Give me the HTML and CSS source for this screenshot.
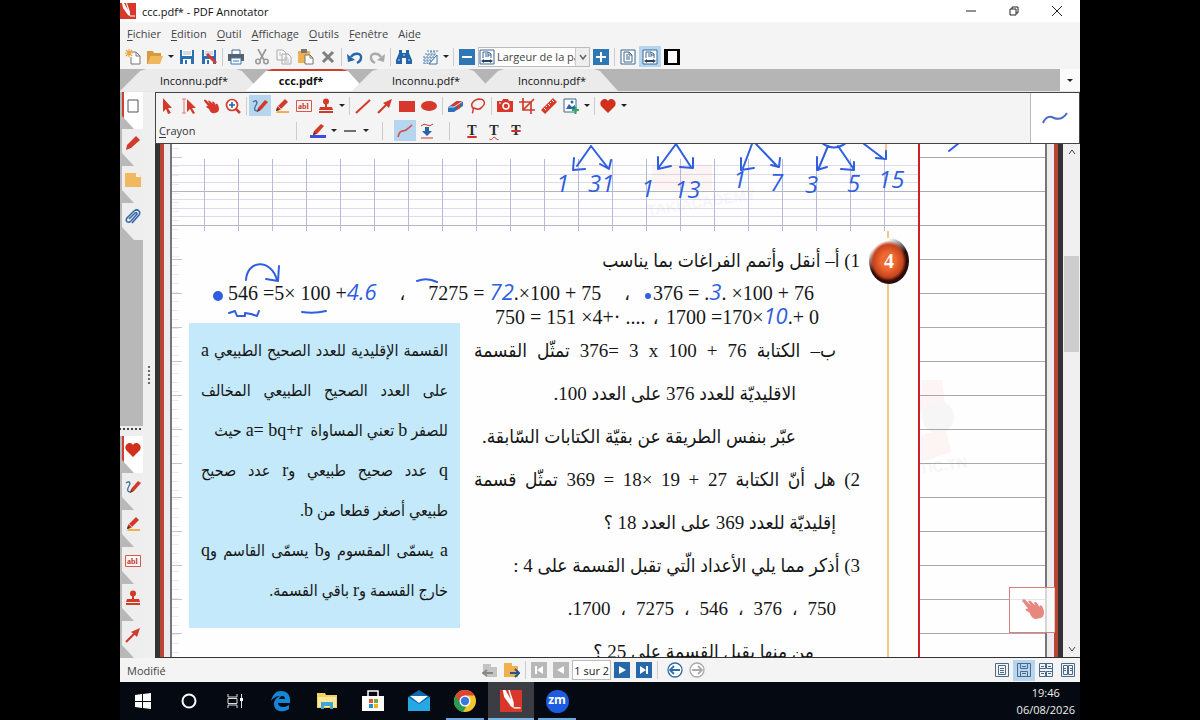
FILE: index.html
```html
<!DOCTYPE html>
<html lang="fr">
<head>
  <meta charset="UTF-8">
  <title>ccc.pdf* - PDF Annotator</title>
  <link rel="stylesheet" href="styles.css">
</head>
<body>

  <!-- Icons used more than once -->
  <svg class="sprite" aria-hidden="true">
    <symbol id="logo" viewBox="0 0 16 16"><path fill="#d8382c" d="M0 0h16v16H0z"/><path fill="#fff" d="M2 0l1 5 5 7 2 1V9L7 0H6l2 7-4-7z"/><path d="M10 13h5" stroke="#fff"/></symbol>
    <symbol id="pen" viewBox="0 0 16 16"><path d="M1 4c3-3 5 0 3 3s-2 6 1 6" fill="none" stroke="#3f6c9c" stroke-width="1.3"/><path d="M5 14l1-4 7-8 3 2-7 8z" fill="#d23a2a"/><path d="M5 14l1-3 2 1z" fill="#333"/></symbol>
    <symbol id="marker" viewBox="0 0 16 16"><path d="M3 13h12v2H2z" fill="#f2b04a"/><path d="M2 13l1-4 8-8 3 3-8 8z" fill="#d23a2a"/><path d="M2 13l1-3 2 2z" fill="#333"/><path d="M4 8l3 3" stroke="#f7b9a8"/></symbol>
    <symbol id="abl" viewBox="0 0 16 16"><path d="M.5 2.500h15v11H.5z" fill="#fff6f5" stroke="#d8584a"/><text x="2" y="11" class="abl-text">abl</text></symbol>
    <symbol id="stamp" viewBox="0 0 16 16"><circle cx="8" cy="3.500" r="3" fill="#d23a2a"/><path d="M7 5h2v4h5l1 3H1l1-3h5zM1 13h14v2H1z" fill="#d23a2a"/></symbol>
    <symbol id="heart" viewBox="0 0 16 16"><path d="M8 15L1 8C-1 4 2 1 5 1q2 0 3 2 1-2 3-2c3 0 6 3 4 7z" fill="#d0301c"/></symbol>
    <symbol id="redarrow" viewBox="0 0 16 16"><path d="M1 15L10 6" stroke="#d23a2a" stroke-width="2.200"/><path d="M15 1l-3 9-3-3-3-2z" fill="#d23a2a"/></symbol>
    <symbol id="hand" viewBox="0 0 16 16"><path d="M1 2q1-1 2 0l4 4-2-3q1-1 2 0l3 3-1-2q1-1 2 0l2 3V6q1-1 2 1c2 4 1 8-3 8-3 1-5-1-6-4L3 9q0-1 2-1L1 3z" fill="#d8382c"/></symbol>
    <symbol id="page" viewBox="0 0 16 16"><path d="M1 1h14v14H1z" fill="#fff" stroke="#3d6690"/><path d="M4 3h5l3 3v7H4zM9 3v3h3M6 6h2M6 8h4M6 10h4" fill="none" stroke="#3d6690"/></symbol>
    <symbol id="fit" viewBox="0 0 16 16"><path d="M1 1h14v14H1z" fill="#fff" stroke="#3d6690"/><path d="M4 9V3h5l3 2v4M6 5h2M6 7h4M9 3v3h3" fill="none" stroke="#3d6690"/><path d="M2 12l3-2v1h6v-1l3 2-3 2v-1H5v1z" fill="#24435f"/></symbol>
    <symbol id="floppy" viewBox="0 0 16 16"><path d="M1 1h14v14H1z" fill="#2c6fb5"/><path d="M3 1h10v6H3zM4 10h8v5H4z" fill="#fff"/><path d="M4 3h8M4 5h8" stroke="#a9b8c6"/><path d="M6 11h2v4H6z" fill="#2c6fb5"/></symbol>
    <symbol id="undo" viewBox="0 0 16 16"><path d="M4 8c3-5 11-4 10 1 0 2-2 4-4 5" fill="none" stroke="currentColor" stroke-width="2.400"/><path d="M0 5l1 8 7-2z" fill="currentColor"/></symbol>
  </svg>

  <div class="app">

    <header class="titlebar">
      <svg class="logo"><use href="#logo"/></svg>
      <h1>ccc.pdf* - PDF Annotator</h1>
      <div class="window-buttons">
        <button aria-label="Réduire"><svg viewBox="0 0 10 10"><path d="M0 5h10"/></svg></button>
        <button aria-label="Restaurer"><svg viewBox="0 0 10 10"><path d="M1 3h6v6H1zM3 3V1h6v6H7" fill="none"/></svg></button>
        <button aria-label="Fermer"><svg viewBox="0 0 10 10"><path d="M0 0l10 10M10 0L0 10"/></svg></button>
      </div>
    </header>

    <nav class="menubar">
      <a href="#"><u>F</u>ichier</a>
      <a href="#"><u>E</u>dition</a>
      <a href="#"><u>O</u>util</a>
      <a href="#"><u>A</u>ffichage</a>
      <a href="#"><u>O</u>utils</a>
      <a href="#"><u>F</u>enêtre</a>
      <a href="#">Ai<u>d</u>e</a>
    </nav>

    <div class="toolbar main-tools">
      <button aria-label="Nouveau"><svg viewBox="0 0 16 16"><path d="M5 3h6l4 4v8H6V8" fill="#fff" stroke="#777"/><path d="M11 3v4h4" fill="none" stroke="#777"/><path d="M4 0v8M0 4h8M1 1l6 6M7 1L1 7" stroke="#eda63c" stroke-width="1.200"/></svg></button>
      <button aria-label="Ouvrir"><svg viewBox="0 0 16 16"><path d="M0 2h6l1 2h7v3H4l-3 8H0z" fill="#d99a3e"/><path d="M4 7h12l-3 8H1z" fill="#f0b75e"/></svg></button>
      <button class="caret" aria-label="Fichiers récents"></button>
      <button aria-label="Enregistrer"><svg><use href="#floppy"/></svg></button>
      <button aria-label="Enregistrer sous"><svg viewBox="0 0 16 16"><use href="#floppy"/><path d="M6 5l9 9" stroke="#d8382c" stroke-width="3"/></svg></button>
      <i class="sep"></i>
      <button aria-label="Imprimer"><svg viewBox="0 0 16 16"><path d="M4 1h8v5H4z" fill="#fff" stroke="#3d6690"/><path d="M0 5h16v7H0z" fill="#5b6169"/><path d="M3 9h10v6H3z" fill="#fff" stroke="#3576b4"/><path d="M5 12h6" stroke="#3576b4"/></svg></button>
      <i class="gap"></i>
      <button aria-label="Couper"><svg viewBox="0 0 16 16"><path d="M4 0l6 11M12 0L6 11" stroke="#999" stroke-width="1.700"/><g fill="none" stroke="#999" stroke-width="1.600"><circle cx="4" cy="12.500" r="2.200"/><circle cx="12" cy="12.500" r="2.200"/></g></svg></button>
      <button aria-label="Copier"><svg viewBox="0 0 16 16"><path d="M1 1h6l3 3v7H1zM6 5h6l3 3v7H6z" fill="#f8f8f8" stroke="#aaa"/><path d="M3 4h2M3 6h3M8 9h4M8 11h5M8 13h5" stroke="#bbb"/></svg></button>
      <button aria-label="Coller"><svg viewBox="0 0 16 16"><path d="M0 2h12v12H0z" fill="#eeb050"/><path d="M3 0h6v4H3z" fill="#777"/><path d="M7 6h5l3 3v6H7z" fill="#fff" stroke="#777"/><path d="M12 6v3h3" fill="none" stroke="#777"/></svg></button>
      <button aria-label="Supprimer"><svg viewBox="0 0 16 16"><path d="M3 3l10 10M13 3L3 13" stroke="#808080" stroke-width="3"/></svg></button>
      <i class="sep"></i>
      <button class="blue" aria-label="Annuler"><svg><use href="#undo"/></svg></button>
      <button class="redo" aria-label="Rétablir"><svg><use href="#undo"/></svg></button>
      <i class="sep"></i>
      <button aria-label="Rechercher"><svg viewBox="0 0 16 16"><path d="M3 1h3v3h4V1h3v3l3 7v4h-6V9H6v6H0v-4l3-7z" fill="#2365a8"/><path d="M2 11h2M12 11h2M7 6h2" stroke="#bcd6ee"/></svg></button>
      <i class="gap"></i>
      <button aria-label="Grille"><svg viewBox="0 0 16 16"><path d="M5 2h11M3 5h12M1 8h12M1 11h11M1 14h9M3 8v7M6 5v10M9 2v13M12 2v10" stroke="#4f80b0" stroke-dasharray="2 1"/><path d="M7 15L15 6v9z" fill="#fff" stroke="#3974ad"/></svg></button>
      <button class="caret" aria-label="Options de grille"></button>
      <i class="sep"></i>
      <button aria-label="Zoom arrière"><svg viewBox="0 0 16 16"><path d="M0 0h16v16H0z" fill="#2f76b5"/><path d="M3 8h10" stroke="#fff" stroke-width="2"/></svg></button>
      <div class="zoom-box">
        <svg><use href="#fit"/></svg>
        <select aria-label="Zoom"><option>Largeur de la page</option></select>
        <span class="chevron"><svg viewBox="0 0 8 8"><path d="M1 2l3 4 3-4" fill="none" stroke="#666" stroke-width="1.500"/></svg></span>
      </div>
      <button aria-label="Zoom avant"><svg viewBox="0 0 16 16"><path d="M0 0h16v16H0z" fill="#2f76b5"/><path d="M3 8h10M8 3v10" stroke="#fff" stroke-width="2"/></svg></button>
      <i class="sep"></i>
      <button aria-label="Page entière"><svg><use href="#page"/></svg></button>
      <button class="on" aria-label="Largeur de page"><svg><use href="#fit"/></svg></button>
      <button aria-label="Plein écran"><svg viewBox="0 0 16 16"><path d="M0 0h16v16H0z"/><path d="M4 2h9v12H4z" fill="#fff"/></svg></button>
    </div>

    <nav class="tabs">
      <a class="tab" href="#">Inconnu.pdf*</a>
      <a class="tab active" href="#">ccc.pdf*</a>
      <a class="tab" href="#">Inconnu.pdf*</a>
      <a class="tab" href="#">Inconnu.pdf*</a>
      <button class="tab-list" aria-label="Liste des onglets"></button>
    </nav>

    <main class="workspace">

      <aside class="rail">
        <div class="rail-tabs">
          <button class="rail-tab current" aria-label="Pages"><svg viewBox="0 0 16 16"><path d="M3 2h10v12H3z" fill="#fff" stroke="#555"/></svg></button>
          <button class="rail-tab" aria-label="Annotations"><svg viewBox="0 0 16 16"><path d="M1 15l1-5 9-9 4 4-9 8z" fill="#d23a2a"/></svg></button>
          <button class="rail-tab" aria-label="Signets"><svg viewBox="0 0 16 16"><path d="M0 1h11l5 4v10H0z" fill="#f0b860"/><path d="M11 1v4h5" fill="#fff3dc"/></svg></button>
          <button class="rail-tab" aria-label="Pièces jointes"><svg viewBox="0 0 16 16"><path d="M4 10l6-6q2-1 2 1l-6 7c-3 3-6 0-4-3l7-7c4-3 7 1 5 4l-7 8" fill="none" stroke="#2d65a5" stroke-width="1.500"/></svg></button>
        </div>
        <div class="rail-fill"></div>
        <div class="rail-tabs favorites">
          <button class="rail-tab current" aria-label="Favoris"><svg><use href="#heart"/></svg></button>
          <button class="rail-tab" aria-label="Crayon"><svg><use href="#pen"/></svg></button>
          <button class="rail-tab" aria-label="Marqueur"><svg><use href="#marker"/></svg></button>
          <button class="rail-tab" aria-label="Texte"><svg><use href="#abl"/></svg></button>
          <button class="rail-tab" aria-label="Tampon"><svg><use href="#stamp"/></svg></button>
          <button class="rail-tab" aria-label="Flèche"><svg><use href="#redarrow"/></svg></button>
        </div>
        <div class="splitter"></div>
      </aside>

      <section class="content">

        <div class="tool-panel">
          <div class="tool-rows">
            <div class="toolbar">
              <button aria-label="Sélection"><svg viewBox="0 0 16 16"><path d="M4 0l9 10H9l3 5-3 1-2-5-3 3z" fill="#d23a2a"/></svg></button>
              <button aria-label="Sélection de texte"><svg viewBox="0 0 16 16"><path d="M1 1h4M1 15h4M3 1v14" stroke="#d97c72"/><path d="M6 1l9 9h-4l3 5-2 1-3-5-3 3z" fill="#d23a2a"/></svg></button>
              <button aria-label="Main"><svg><use href="#hand"/></svg></button>
              <button aria-label="Loupe"><svg viewBox="0 0 16 16"><circle cx="7" cy="7" r="5.500" fill="#fff" stroke="#d23a2a" stroke-width="1.700"/><path d="M11 11l4 4" stroke="#d23a2a" stroke-width="2.500"/><path d="M4 7h6M7 4v6" stroke="#27639d" stroke-width="1.600"/></svg></button>
              <i class="sep"></i>
              <button class="on" aria-label="Crayon"><svg><use href="#pen"/></svg></button>
              <button aria-label="Marqueur"><svg><use href="#marker"/></svg></button>
              <button aria-label="Texte"><svg><use href="#abl"/></svg></button>
              <button aria-label="Tampon"><svg><use href="#stamp"/></svg></button>
              <button class="caret" aria-label="Choix du tampon"></button>
              <i class="sep"></i>
              <button aria-label="Ligne"><svg viewBox="0 0 16 16"><path d="M1 15L15 2" stroke="#d23a2a" stroke-width="2"/></svg></button>
              <button aria-label="Flèche"><svg><use href="#redarrow"/></svg></button>
              <button aria-label="Rectangle"><svg viewBox="0 0 16 16"><path d="M0 3h16v11H0z" fill="#d8382c"/></svg></button>
              <button aria-label="Ellipse"><svg viewBox="0 0 16 16"><ellipse cx="8" cy="8" rx="8" ry="5" fill="#d8382c"/></svg></button>
              <i class="sep"></i>
              <button aria-label="Gomme"><svg viewBox="0 0 16 16"><path d="M0 9l9-6h6v5l-9 6H0z" fill="#2f70b3"/><path d="M7 4l2-1h6l-3 3v4l-3 2V8H3z" fill="#d8382c"/><path d="M0 9h6l9-6" fill="none" stroke="#d8e5f2"/></svg></button>
              <button aria-label="Lasso"><svg viewBox="0 0 16 16"><path d="M4 11C-1 7 3 2 9 1c6 0 7 5 3 8-2 3-6 2-8 1-2 1 0 4-2 5" fill="none" stroke="#d23a2a" stroke-width="1.500"/></svg></button>
              <i class="sep"></i>
              <button aria-label="Instantané"><svg viewBox="0 0 16 16"><path d="M0 3h5l1-2h5l1 2h4v11H0z" fill="#d8382c"/><circle cx="9" cy="8" r="3" fill="#d8382c" stroke="#fff" stroke-width="1.500"/><path d="M2 5h2" stroke="#fff"/></svg></button>
              <button aria-label="Rogner"><svg viewBox="0 0 16 16"><path d="M4 0v12h12M0 4h12v12M4 12L15 1" fill="none" stroke="#d23a2a" stroke-width="1.700"/></svg></button>
              <button aria-label="Règle"><svg viewBox="0 0 16 16"><path d="M0 12L12 0l4 4L4 16z" fill="#d8382c"/><path d="M3 10l2 2M5 8l1 1M7 6l2 2M9 4l1 1M11 2l2 2" stroke="#fff"/></svg></button>
              <button aria-label="Image"><svg viewBox="0 0 16 16"><path d="M1 1h12v13H1z" fill="#fff" stroke="#3d6690"/><path d="M3 11l3-5 3 3 3-2v4z" fill="#2d65a5"/><circle cx="9" cy="4" r="1.500" fill="#2d65a5"/><path d="M9 12h7M12.500 9v7" stroke="#2fa866" stroke-width="2"/></svg></button>
              <button class="caret" aria-label="Choix de l'image"></button>
              <i class="sep"></i>
              <button aria-label="Favoris"><svg><use href="#heart"/></svg></button>
              <button class="caret" aria-label="Liste des favoris"></button>
            </div>
            <div class="toolbar options">
              <span class="tool-name"><u>C</u>rayon</span>
              <i class="sep"></i>
              <i class="gap"></i>
              <i class="gap"></i>
              <button aria-label="Couleur"><svg viewBox="0 0 16 16"><path d="M0 12h16v3H0z" fill="#3d4be0"/><path d="M3 12l1-4 7-7 3 2-7 8z" fill="#d23a2a"/><path d="M3 12l1-3 2 2z" fill="#333"/></svg></button>
              <button class="caret" aria-label="Choix de la couleur"></button>
              <button aria-label="Épaisseur"><svg viewBox="0 0 16 16"><path d="M2 8h12" stroke="#444" stroke-width="1.500"/></svg></button>
              <button class="caret" aria-label="Choix de l'épaisseur"></button>
              <i class="sep wide"></i>
              <button class="on" aria-label="Lissage"><svg viewBox="0 0 16 16"><path d="M1 14c2-8 5-5 8-7q3-2 6-5" fill="none" stroke="#cf5148" stroke-width="1.700"/></svg></button>
              <button aria-label="Pression"><svg viewBox="0 0 16 16"><path d="M2 3q3-3 6-1t6-1M2 15h12" fill="none" stroke="#d23a2a"/><path d="M6 4h4v4h3l-5 5-5-5h3z" fill="#2365a8"/></svg></button>
              <i class="sep wide"></i>
              <button class="letter underline" aria-label="Souligner">T</button>
              <button class="letter wavy" aria-label="Soulignement ondulé">T</button>
              <button class="letter strike" aria-label="Barrer">T</button>
            </div>
          </div>
          <div class="preview"><svg viewBox="0 0 28 16"><path d="M2 13C5 6 9 6 13 8c5 2 9 1 13-5" fill="none" stroke="#4a68c4" stroke-width="2"/></svg></div>
        </div>

        <div class="viewer">
          <div class="mat">
            <article class="paper" lang="ar">
              <div class="exercise">
                <div class="seyes"></div>

                <div class="heading" dir="rtl">
                  <span class="badge">4</span>
                  <h2>1) أ– أنقل وأتمم الفراغات بما يناسب</h2>
                </div>

                <div class="sums">
                  <span>546 =5× 100 +<em>4.6</em></span>
                  <span>،</span>
                  <span>7275 = <em>72</em>.×100 + 75</span>
                  <span>،</span>
                  <span>376 = .<em>3</em>. ×100 + 76</span>
                </div>

                <div class="columns">
                  <div class="rule" dir="rtl">
                    <p class="full">القسمة الإقليدية للعدد الصحيح الطبيعي <b>a</b></p>
                    <p class="full">على العدد الصحيح الطبيعي المخالف</p>
                    <p>للصفر <b>b</b> تعني المساواة &nbsp;<b dir="ltr">a= bq+r</b> حيث</p>
                    <p class="full"><b>q</b> عدد صحيح طبيعي و<b>r</b> عدد صحيح</p>
                    <p>طبيعي أصغر قطعا من <b>b</b>.</p>
                    <p class="full"><b>a</b> يسمّى المقسوم و<b>b</b> يسمّى القاسم و<b>q</b></p>
                    <p>خارج القسمة و<b>r</b> باقي القسمة.</p>
                  </div>
                  <div class="questions" dir="rtl">
                    <div class="sums second" dir="ltr">
                      <span>750 = 151 ×4+· ....</span>
                      <span>،</span>
                      <span>1700 =170×<em>10</em>.+ 0</span>
                    </div>
                    <p class="full in-1">ب– الكتابة <bdi dir="ltr">376= 3 x 100 + 76</bdi> تمثّل القسمة</p>
                    <p class="in-2">الاقليديّة للعدد 376 على العدد 100.</p>
                    <p class="in-2">عبّر بنفس الطريقة عن بقيّة الكتابات السّابقة.</p>
                    <p class="full">2) هل أنّ الكتابة <bdi dir="ltr">369 = 18× 19 + 27</bdi> تمثّل قسمة</p>
                    <p class="in-1">إقليديّة للعدد 369 على العدد 18 ؟</p>
                    <p>3) أذكر مما يلي الأعداد الّتي تقبل القسمة على 4 :</p>
                    <p class="in-1 list"><span>750</span><span>،</span><span>376</span><span>،</span><span>546</span><span>،</span><span>7275</span><span>،</span><span>1700.</span></p>
                    <p class="in-3">من منها يقبل القسمة على 25 ؟</p>
                  </div>
                </div>
              </div>
              <div class="margin"></div>

              <!-- Ink annotations over the page -->
              <svg class="ink" viewBox="172 144 873 514">
                <path class="orange" d="M886 144v15"/>
                <g class="watermark">
                  <path d="M652 165h60v25h-60zM922 380h20l3 24-25 8zM921 435l25-5 5 22-30 10z" fill="#ee7766"/>
                  <circle cx="938" cy="417" r="16"/>
                  <text x="648" y="216" transform="rotate(-9 648 216)">TAKIACADEMY</text>
                  <text x="920" y="474" transform="rotate(-8 920 474)">TIC.TN</text>
                </g>
                <path d="M591 146L577 166M591 146l17 22M574 158l-1 12 12-1M611 160l-2 9-9-5M676 144l-17 23M676 144l15 23M658 157v12l13-3M693 158v10l-13-1M752 144l-9 24M756 144l22 23M741 158v12l13-2M771 165l8 2 1-9M828 146l-10 24M838 146l15 22M817 157v13l10-3M841 169l13 1v-8M864 144l20 15M876 158l10 1v-8M822 143q12 9 24 0M949 151l10-8"/>
                <path d="M246 280c1-20 25-22 31 0M266 279l12 2 1-15M229 313l6-2 2 5h8v-3l6 1 6 2 2-5M302 312q12 2 24-1M417 281q10-4 20 1"/>
                <circle cx="218" cy="296" r="4"/>
                <circle cx="648" cy="296" r="2"/>
                <g class="hand-text">
                  <text x="556" y="192">1</text><text x="588" y="192">31</text>
                  <text x="641" y="197">1</text><text x="674" y="198">13</text>
                  <text x="733" y="188">1</text><text x="770" y="191">7</text>
                  <text x="805" y="193">3</text><text x="847" y="192">5</text><text x="878" y="188">15</text>
                </g>
              </svg>
            </article>
          </div>
          <button class="pan-button" aria-label="Déplacer la page"><svg><use href="#hand"/></svg></button>
          <div class="scrollbar">
            <svg viewBox="0 0 8 8"><path d="M1 6l3-4 3 4"/></svg>
            <div class="track"><div class="thumb"></div></div>
            <svg viewBox="0 0 8 8"><path d="M1 2l3 4 3-4"/></svg>
          </div>
        </div>
      </section>
    </main>

    <footer class="statusbar">
      <span class="state">Modifié</span>
      <div class="toolbar pager">
        <button aria-label="Document précédent"><svg viewBox="0 0 16 16"><path d="M1 2h8v3h6v10H4V9H1z" fill="#c4c4c4"/><path d="M11 11H2M5 8l-4 3 4 3" fill="none" stroke="#888" stroke-width="2"/></svg></button>
        <button aria-label="Document suivant"><svg viewBox="0 0 16 16"><path d="M0 1h8v3h6v11H0z" fill="#f0b050"/><path d="M6 11h9M11 7l4 4-4 4" fill="none" stroke="#28558b" stroke-width="2"/></svg></button>
        <i class="sep"></i>
        <button class="grey" aria-label="Première page"><svg viewBox="0 0 16 16"><path d="M0 0h16v16H0z"/><path d="M4 4h2v8H4zM12 4v8L6 8z" fill="#fff"/></svg></button>
        <button class="grey" aria-label="Page précédente"><svg viewBox="0 0 16 16"><path d="M0 0h16v16H0z"/><path d="M11 4v8L4 8z" fill="#fff"/></svg></button>
        <input type="text" value="1 sur 2" aria-label="Page">
        <button class="blue" aria-label="Page suivante"><svg viewBox="0 0 16 16"><path d="M0 0h16v16H0z"/><path d="M5 4v8l7-4z" fill="#fff"/></svg></button>
        <button class="blue" aria-label="Dernière page"><svg viewBox="0 0 16 16"><path d="M0 0h16v16H0z"/><path d="M4 4v8l6-4zM10 4h2v8h-2z" fill="#fff"/></svg></button>
        <i class="sep"></i>
        <i class="gap"></i>
        <button aria-label="Vue précédente"><svg viewBox="0 0 16 16"><circle cx="8" cy="8" r="7" fill="#fff" stroke="#2f6da8" stroke-width="1.300"/><path d="M13 8H4M7 4L3 8l4 4" fill="none" stroke="#2f6da8" stroke-width="1.800"/></svg></button>
        <button aria-label="Vue suivante"><svg viewBox="0 0 16 16"><circle cx="8" cy="8" r="7" fill="#fff" stroke="#aaa" stroke-width="1.300"/><path d="M3 8h9M9 4l4 4-4 4" fill="none" stroke="#aaa" stroke-width="1.800"/></svg></button>
      </div>
      <div class="toolbar views">
        <button aria-label="Une page"><svg viewBox="0 0 16 16"><path d="M1.500 1.500h13v13h-13zM4.500 3.500h7v9h-7zM6 6.500h4M6 8.500h4M6 10.500h4"/></svg></button>
        <button class="on" aria-label="Défilement"><svg viewBox="0 0 16 16"><path d="M1.500 1.500h13v13h-13zM4.500 2v4.500h7V2M4.500 14V9.500h7V14M6 4.500h4M6 11.500h4"/></svg></button>
        <button aria-label="Deux pages en défilement"><svg viewBox="0 0 16 16"><path d="M1.500 1.500h13v13h-13zM2 6.500h5.500V2M14 6.500H8.500V2M2 9.500h5.500V14M14 9.500H8.500V14M3 4.500h3M10 4.500h3M3 11.500h3M10 11.500h3"/></svg></button>
        <button aria-label="Deux pages"><svg viewBox="0 0 16 16"><path d="M1.500 1.500h13v13h-13zM3.500 3.500h4v9h-4zM8.500 3.500h4v9h-4zM4 6.500h2M4 8.500h2M10 6.500h2M10 8.500h2"/></svg></button>
      </div>
    </footer>

    <div class="taskbar">
      <button aria-label="Démarrer"><svg viewBox="0 0 22 22"><path d="M3 5l7-1v7H3zM11 4l8-1v8h-8zM3 12h7v6l-7-1zM11 12h8v7l-8-1z" fill="#fff"/></svg></button>
      <button aria-label="Cortana"><svg viewBox="0 0 22 22"><circle cx="11" cy="11" r="6.500" fill="none" stroke="#fff" stroke-width="2"/></svg></button>
      <button aria-label="Vue des tâches"><svg viewBox="0 0 22 22"><path d="M4 4v3h9V4M4 18v-3h9v3M4 8.500h9v5H4zM17.500 4v14" fill="none" stroke="#ddd"/><path d="M16 8h3v3h-3z" fill="#fff"/></svg></button>
      <button aria-label="Edge"><svg viewBox="0 0 22 22"><path d="M1 11C3 4 6 1 11 1c6 0 10 4 9 12H8c0 5 7 5 11 2v4c-6 4-15 3-15-5 0-4 3-7 6-8-4 0-7 2-9 5zm8-2h6c0-4-5-4-6 0z" fill="#1585d8"/></svg></button>
      <button aria-label="Explorateur"><svg viewBox="0 0 22 22"><path d="M1 3h8l1 2h11v13H1z" fill="#f5cf63"/><path d="M2 7h18v10H2z" fill="#fce79b"/><path d="M5 19v-7h12v7h-3v-3H8v3z" fill="#3fa6d8"/></svg></button>
      <button aria-label="Microsoft Store"><svg viewBox="0 0 22 22"><path d="M6 7V1h10v6" fill="none" stroke="#fff" stroke-width="1.500"/><path d="M0 6h22v15H0z" fill="#fff"/><path d="M7 9h4v4H7z" fill="#e75436"/><path d="M12 9h4v4h-4z" fill="#75a928"/><path d="M7 14h4v4H7z" fill="#1b92d1"/><path d="M12 14h4v4h-4z" fill="#f1b119"/></svg></button>
      <button aria-label="Courrier"><svg viewBox="0 0 22 22"><path d="M0 7l11-7 11 7v14H0z" fill="#1069a8"/><path d="M2 6h18l-9 7z" fill="#f5fbff"/><path d="M0 7l11 7 11-7v14H0z" fill="#26a8e4"/></svg></button>
      <button class="open" aria-label="Chrome"><svg viewBox="0 0 22 22"><circle cx="11" cy="11" r="11" fill="#f5c72c"/><path d="M1.500 5.500A11 11 0 0 1 20.500 5.500H11L6 14z" fill="#de4435"/><path d="M1.500 5.500L7 14l5 3-3 5A11 11 0 0 1 1.500 5.500z" fill="#289a51"/><circle cx="11" cy="11" r="5.500" fill="#fff"/><circle cx="11" cy="11" r="4.200" fill="#3a78df"/></svg></button>
      <button class="open front" aria-label="PDF Annotator"><svg><use href="#logo"/></svg></button>
      <button class="open" aria-label="Zoom"><span class="zoom-logo">zm</span></button>
      <div class="clock"><time>19:46</time><time>06/08/2026</time></div>
    </div>

  </div>
</body>
</html>
```
FILE: styles.css
```css
* {
  margin: 0;
  padding: 0;
  box-sizing: border-box;
}

body {
  background: #000;
  color: #2b2b2b;
  font-family: 'Open Sans', 'Noto Sans', sans-serif;
  font-size: 11px;
}

button {
  border: none;
  background: none;
  font: inherit;
  color: inherit;
}

a {
  color: inherit;
  text-decoration: none;
}

u {
  text-underline-offset: 2px;
}

.sprite {
  display: none;
}

.abl-text {
  font: bold 8px 'Liberation Serif', serif;
  fill: #b93a2e;
}

.app {
  width: 80%;
  height: 100vh;
  margin: 0 auto;
  display: flex;
  flex-direction: column;
  background: #f4f4f5;
}

/* Title and menu */
.titlebar {
  height: 22px;
  display: flex;
  align-items: center;
  background: #fff;
}

.titlebar h1 {
  flex: 1;
  margin-left: 6px;
  font-size: 11px;
  font-weight: normal;
  color: #111;
}

.logo {
  width: 16px;
  height: 16px;
}

.window-buttons {
  display: flex;
  padding-right: 2px;
}

.window-buttons button {
  width: 43px;
  height: 20px;
}

.window-buttons svg {
  width: 10px;
  height: 10px;
  stroke: #222;
}

.menubar {
  height: 22px;
  display: flex;
  align-items: center;
  gap: 10px;
  padding-left: 7px;
  color: #444;
}

/* Toolbars */
.toolbar {
  display: flex;
  align-items: center;
}

.toolbar button {
  flex: none;
  width: 22px;
  height: 21px;
  display: flex;
  align-items: center;
  justify-content: center;
}

.toolbar button svg {
  width: 16px;
  height: 16px;
}

.toolbar .on {
  background: #b5d6ee;
}

.toolbar .caret {
  width: 10px;
}

.caret::after, .tab-list::after {
  content: "";
  border: 3px solid transparent;
  border-top-color: #222;
  border-bottom: none;
}

.sep {
  flex: none;
  width: 1px;
  height: 18px;
  margin: 0 2px;
  background: #ccc;
}

.sep.wide {
  margin: 0 11px;
}

.gap {
  flex: none;
  width: 4px;
}

.blue {
  color: #2768a8;
}

.redo {
  color: #aaa;
  transform: scaleX(-1);
}

.main-tools {
  height: 25px;
  padding-left: 2px;
}

.zoom-box {
  width: 112px;
  height: 20px;
  display: flex;
  align-items: center;
  border: 1px solid #bbb;
  background: #fff;
}

.zoom-box > svg {
  flex: none;
  width: 16px;
  height: 16px;
  margin-right: 2px;
}

.zoom-box select {
  flex: 1;
  min-width: 0;
  appearance: none;
  border: none;
  background: none;
  font: inherit;
  color: #444;
  text-overflow: clip;
}

.chevron {
  width: 14px;
  height: 18px;
  display: flex;
  align-items: center;
  justify-content: center;
  border-left: 1px solid #ccc;
  background: #eee;
}

.chevron svg {
  width: 8px;
  height: 8px;
}

/* Document tabs */
.tabs {
  height: 23px;
  display: flex;
  background: #b5b5b5;
  border-bottom: 1px solid #e6e6e6;
}

.tab {
  width: 140px;
  line-height: 24px;
  text-align: center;
  color: #111;
  background: #ebebeb;
  padding-left: 8px;
  clip-path: polygon(0 100%, 20px 2px, 26px 0, calc(100% - 24px) 0, calc(100% - 18px) 2px, 100% 100%);
}

.tab + .tab {
  margin-left: -14px;
}

.tab.active {
  position: relative;
  width: 120px;
  padding: 0 10px 0 0;
  border-top: 2px solid #d0402f;
  line-height: 20px;
  font-weight: bold;
  background: #fff;
}

.tab-list {
  width: 20px;
  margin-left: auto;
  display: flex;
  align-items: center;
  justify-content: center;
  background: #fafafa;
}

.workspace {
  flex: 1;
  min-height: 0;
  display: flex;
}

/* Left rail */
.rail {
  width: 35px;
  display: grid;
  grid-template: auto 1fr auto / 23px 12px;
  background: #b8b8b8;
}

.rail-tab {
  display: flex;
  width: 23px;
  height: 37px;
  padding: 6px 0 0 5px;
  background: #eee;
  clip-path: polygon(2px 0, 100% 0, 100% 100%, 14px 100%, 2px 24px);
}

.rail-tab.current {
  background: #fff;
  border-left: 4px solid #d0402f;
  padding-left: 1px;
}

.rail-tab svg {
  width: 16px;
  height: 16px;
}

.rail-fill {
  grid-column: 1;
}

.favorites {
  grid-column: 1;
  padding-top: 10px;
  background: radial-gradient(circle, #444 1px, transparent 1px) 2px 0 / 4px 6px repeat-x, linear-gradient(#eee, #eee) 0 0 / 100% 10px no-repeat;
}

.splitter {
  grid-area: 1 / 2 / 4 / 3;
  display: flex;
  align-items: center;
  justify-content: center;
  background: #efefef;
}

.splitter::before {
  content: "";
  width: 2px;
  height: 18px;
  background: repeating-linear-gradient(#666 0 2px, transparent 2px 4px);
}

.content {
  flex: 1;
  min-width: 0;
  display: flex;
  flex-direction: column;
}

.tool-panel {
  height: 52px;
  display: flex;
  border: 1px solid #444;
}

.tool-rows {
  flex: 1;
}

.tool-rows .toolbar {
  height: 25px;
}

.tool-name {
  width: 138px;
  padding-left: 3px;
  color: #333;
}

.options .letter {
  font: bold 14px/14px 'Liberation Serif', serif;
}

.underline {
  text-decoration: underline 2px #d0302a;
  text-underline-offset: 1px;
}

.wavy {
  text-decoration: underline wavy 1px #d0302a;
}

.strike {
  text-decoration: line-through 2px #d0302a;
}

.preview {
  width: 49px;
  display: flex;
  align-items: center;
  justify-content: center;
  background: #fff;
  border-left: 1px solid #bbb;
}

.preview svg {
  width: 28px;
  height: 16px;
}

/* Document */
.viewer {
  position: relative;
  flex: 1;
  min-height: 0;
  display: flex;
  border-left: 5px solid #333;
  border-bottom: 1px solid #333;
}

.mat {
  flex: 1;
  min-width: 0;
  padding: 0 7px 0 6px;
  background: #ececee;
  border: solid #b94535;
  border-width: 0 4px;
}

.paper {
  position: relative;
  height: 100%;
  display: flex;
  overflow: hidden;
  background: #fefefe;
  border: solid #77777b;
  border-width: 0 2px;
  color: #161616;
  font: 19px 'Liberation Serif', 'DejaVu Sans Condensed', 'DejaVu Sans', serif;
}

.exercise {
  position: relative;
  flex: 1;
  min-width: 0;
  padding-top: 15px;
  background:
    repeating-linear-gradient(transparent 0 13px, #c4c4c8 13px 14px, transparent 14px 34px) 0 0 / 10px 100% no-repeat,
    repeating-linear-gradient(transparent 0 4px, #ebebee 4px 5px, transparent 5px 9px) 0 0 / 7px 100% no-repeat;
}

/* vertical orange rule that carries the badges */
.exercise::before {
  content: "";
  position: absolute;
  top: 87px;
  bottom: 0;
  right: 29px;
  width: 2px;
  background: #efc88a;
}

.seyes {
  height: 72px;
  background:
    repeating-linear-gradient(90deg, transparent 0 32px, #b9b9e0 32px 33px, transparent 33px 34px),
    repeating-linear-gradient(transparent 0 6px, #dcdcee 6px 7px, transparent 7px 15px, #dcdcee 15px 16px, transparent 16px 23px, #dcdcee 23px 24px, transparent 24px 32px, #b4b4c2 32px 33px, transparent 33px 34px);
}

.heading {
  height: 50px;
  display: flex;
  align-items: center;
  gap: 9px;
  padding: 10px 9px 0;
}

.heading h2 {
  font-size: 19px;
  line-height: 40px;
  font-weight: normal;
}

.badge {
  position: relative;
  width: 40px;
  height: 46px;
  border-radius: 50%;
  background: radial-gradient(ellipse at 48% 50%, #ee6a30 0 25%, #c9431c 50%, transparent 62%), linear-gradient(150deg, #fff 18%, #2a0c08 50%);
  color: #fff;
  font-size: 20px;
  font-weight: bold;
  line-height: 46px;
  text-align: center;
}

.sums {
  height: 24px;
  display: flex;
  justify-content: space-between;
  padding: 0 104px 0 56px;
  font-size: 20px;
  line-height: 24px;
  white-space: nowrap;
}

.sums.second {
  padding: 0 41px 0 21px;
}

/* handwritten answers */
.sums em {
  color: #2f5fe0;
  font: italic 500 22px/16px 'Open Sans', sans-serif;
}

.columns {
  display: grid;
  grid-template-columns: minmax(0, 271fr) minmax(0, 386fr);
  gap: 14px;
  padding: 0 58px 0 17px;
}

.rule {
  align-self: start;
  margin-top: 18px;
  padding: 8px 12px 17px;
  background: #c3e9fa;
  font-size: 16px;
  line-height: 40px;
  white-space: nowrap;
}

.rule p {
  height: 40px;
}

.rule b {
  font-size: 18px;
  font-weight: normal;
  line-height: 20px;
  unicode-bidi: isolate;
}

.questions {
  line-height: 43px;
  white-space: nowrap;
}

.questions p {
  height: 43px;
}

.full {
  text-align-last: justify;
}

.in-1 {
  padding-right: 24px;
}

.in-2 {
  padding-right: 64px;
}

.in-3 {
  padding-right: 46px;
}

.list {
  display: flex;
  gap: 10px;
}

.margin {
  flex: 0 0 127px;
  border-left: 2px solid #cf1f2c;
  background: repeating-linear-gradient(transparent 0 13px, #a9a9ac 13px 14px, transparent 14px 34px);
}

.ink {
  position: absolute;
  left: 0;
  top: 0;
  width: 873px;
  height: 514px;
  fill: none;
  stroke: #2f5fe0;
  stroke-width: 2;
  stroke-linecap: round;
  stroke-linejoin: round;
}

.ink circle {
  fill: #2f5fe0;
}

.ink .orange {
  stroke: #efc88a;
}

.hand-text {
  fill: #2f5fe0;
  stroke: none;
  font: italic 500 24px 'Open Sans', sans-serif;
}

.ink .watermark {
  opacity: 0.06;
  stroke: none;
  fill: #889;
  font: bold 15px 'Liberation Sans', sans-serif;
}

.ink .watermark circle {
  fill: #889;
}

.pan-button {
  position: absolute;
  right: 25px;
  bottom: 24px;
  width: 46px;
  height: 46px;
  border: 1px solid #d98080;
  border-right: none;
  background: rgba(255, 255, 255, 0.7);
}

.pan-button svg {
  width: 23px;
  height: 23px;
  opacity: 0.6;
}

.scrollbar {
  flex: none;
  width: 22px;
  display: flex;
  flex-direction: column;
  align-items: center;
  border-left: 5px solid #333;
  background: #f0f0f0;
}

.scrollbar svg {
  width: 8px;
  height: 16px;
  fill: none;
  stroke: #444;
}

.track {
  flex: 1;
  width: 100%;
  padding: 0 1px;
}

.thumb {
  height: 20%;
  margin-top: 96px;
  background: #cdcdcd;
}

/* Status bar */
.statusbar {
  height: 24px;
  display: flex;
  align-items: center;
  justify-content: space-between;
  padding: 0 1px 0 7px;
  color: #444;
}

.state {
  width: 37%;
}

.pager {
  flex: 1;
}

.pager input {
  width: 39px;
  height: 20px;
  border: 1px solid #bbb;
  background: #fff;
  font: inherit;
  color: #222;
  text-align: center;
}

.grey {
  color: #b8b8b8;
}

.grey svg, .pager .blue svg {
  fill: currentColor;
}

.views svg {
  fill: none;
  stroke: #4a6a8c;
}

/* Windows taskbar */
.taskbar {
  height: 38px;
  display: flex;
  background: #050a12;
  color: #eee;
}

.taskbar button {
  width: 46px;
  display: flex;
  align-items: center;
  justify-content: center;
}

.taskbar svg {
  width: 22px;
  height: 22px;
}

.taskbar .open {
  background: linear-gradient(#6ca8dc, #6ca8dc) bottom / 38px 2px no-repeat;
}

.taskbar .front {
  background: linear-gradient(#7ab4e4, #7ab4e4) bottom / 100% 2px no-repeat, #3b3d42;
}

.zoom-logo {
  width: 23px;
  height: 23px;
  border-radius: 50%;
  background: #1d5be0;
  color: #fff;
  font-size: 12px;
  font-weight: bold;
  line-height: 20px;
}

.clock {
  margin-left: auto;
  padding: 2px 5px 0 0;
  display: flex;
  flex-direction: column;
  align-items: center;
  line-height: 17px;
}
```
